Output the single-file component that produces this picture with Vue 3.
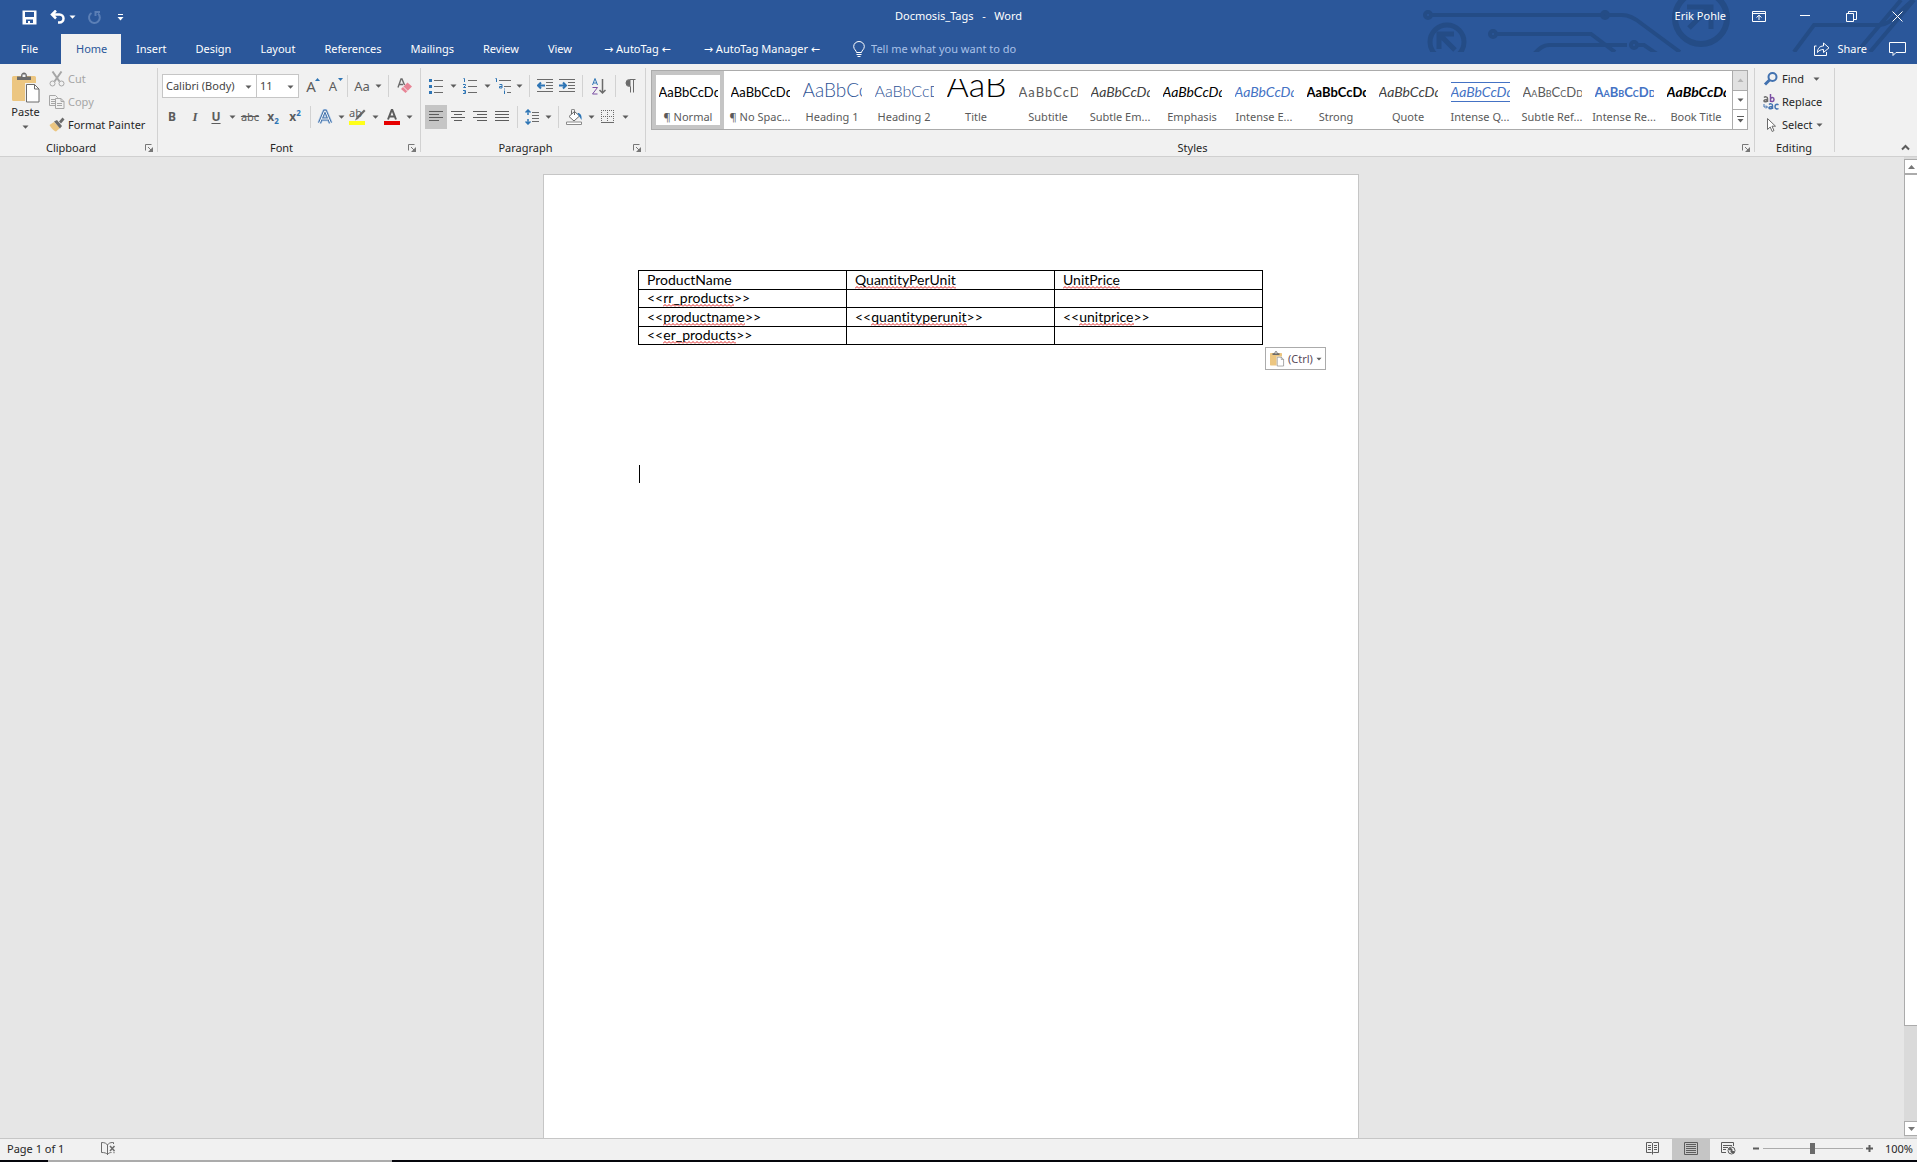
<script setup>
import { ref } from 'vue'

const tabs = ['Insert', 'Design', 'Layout', 'References', 'Mailings', 'Review', 'View']
const addins = ['AutoTag', 'AutoTag Manager']

const styles = [
  { name: '¶ Normal', cls: 'plain' },
  { name: '¶ No Spac...', cls: 'plain' },
  { name: 'Heading 1', cls: 'h1' },
  { name: 'Heading 2', cls: 'h2' },
  { name: 'Title', cls: 'title' },
  { name: 'Subtitle', cls: 'subtitle' },
  { name: 'Subtle Em...', cls: 'subtle-em' },
  { name: 'Emphasis', cls: 'emphasis' },
  { name: 'Intense E...', cls: 'intense-em' },
  { name: 'Strong', cls: 'strong' },
  { name: 'Quote', cls: 'subtle-em' },
  { name: 'Intense Q...', cls: 'intense-quote' },
  { name: 'Subtle Ref...', cls: 'subtle-ref' },
  { name: 'Intense Re...', cls: 'intense-ref' },
  { name: 'Book Title', cls: 'book' },
]

const rows = [
  [{ t: 'ProductName' }, { t: 'QuantityPerUnit', bad: true }, { t: 'UnitPrice', bad: true }],
  [{ pre: '<<', t: 'rr_products', post: '>>', bad: true }, {}, {}],
  [
    { pre: '<<', t: 'productname', post: '>>', bad: true },
    { pre: '<<', t: 'quantityperunit', post: '>>', bad: true },
    { pre: '<<', t: 'unitprice', post: '>>', bad: true },
  ],
  [{ pre: '<<', t: 'er_products', post: '>>', bad: true }, {}, {}],
]

const zoom = ref(50)
const tell = ref('')
</script>

<template>
  <div class="app">
    <svg class="defs" aria-hidden="true">
      <symbol id="caret" viewBox="0 0 7 4"><path d="M0.5 0.5h6L3.5 3.8z" fill="currentColor" /></symbol>
      <symbol id="launch" viewBox="0 0 9 9">
        <path d="M0.5 6.500V0.500H6.500" fill="none" stroke="#777" />
        <path d="M3 3l3 3" stroke="#777" fill="none" /><path d="M8 3v5H3z" fill="#777" />
      </symbol>
      <symbol id="clip" viewBox="0 0 30 32">
        <path d="M1 5.500a1.500 1.500 0 0 1 1.500-1.500h21a1.500 1.500 0 0 1 1.500 1.500V29H2.500A1.500 1.500 0 0 1 1 27.500z" fill="#ecc681" />
        <path d="M6 8V4.500h4C10 1.500 11.500 0.500 13 0.500s3 1 3 4h4V8z" fill="#6b6b6b" />
        <rect x="11.500" y="2.500" width="3" height="2.500" fill="#f1f1f1" />
        <path d="M14 11h11l5 5v15H14z" fill="#f1f1f1" />
        <path d="M15.500 12.500h8l4.500 4.500v13H15.500z" fill="#fff" stroke="#6b6b6b" />
        <path d="M23.500 12.500V17H28" fill="none" stroke="#6b6b6b" />
      </symbol>
    </svg>

    <header class="titlebar">
      <svg class="circuit" viewBox="0 0 500 52" aria-hidden="true" fill="none" stroke="#244c86" stroke-width="4">
        <circle cx="11" cy="15" r="3" /><path d="M14 15h184" />
        <circle cx="30" cy="42" r="17" stroke-width="5" />
        <path d="M22 34l16 16M22 49V34h15" stroke-width="5" />
        <circle cx="76" cy="34" r="3" /><path d="M79 34h95l24 18" />
        <path d="M117 54c4-4 8-9 15-9h78" />
        <circle cx="188" cy="15" r="3" /><path d="M191 15h14c8 0 14 4 20 9l38 28" />
        <circle cx="217" cy="45" r="3" /><path d="M220 45h7l13 9" />
        <circle cx="284" cy="18" r="26" stroke-width="6" />
        <path d="M272 28l20-20M270 7h24v22" stroke-width="5" />
        <path d="M377 52l20-27h66c9 0 12-7 33-25M440 52l44-52M453 52l44-52" />
      </svg>
      <div class="side">
        <div class="qat">
          <button class="flat save" aria-label="Save">
            <svg width="15" height="15" viewBox="0 0 15 15"><path d="M0.500 0.500h14v14h-14z" fill="#fff" /><path d="M3 2h9v5H3zM4 9.500h7V13H8v-2H6v2H4z" fill="#2b579a" /></svg>
          </button>
          <button class="flat undo" aria-label="Undo">
            <svg width="16" height="14" viewBox="0 0 16 14" fill="none" stroke="#fff" stroke-width="2.500"><path d="M6 0.500L2 4.500l4 4M2.500 4.500h7a4 4 0 0 1 0 8H8" /></svg>
          </button>
          <button class="flat undo-more" aria-label="Undo history"><svg width="7" height="4"><use href="#caret" /></svg></button>
          <button class="flat redo" aria-label="Repeat" disabled>
            <svg width="15" height="15" viewBox="0 0 15 15" fill="none" stroke="#5b7fb6" stroke-width="2"><path d="M4.500 3A5.400 5.400 0 1 0 11 3.500M8.500 6V2H13" /></svg>
          </button>
          <button class="flat custom" aria-label="Customize toolbar">
            <svg width="7" height="7" viewBox="0 0 7 7"><path d="M1 0h5v1H1zM0.500 3h6l-3 3.500z" fill="#fff" /></svg>
          </button>
        </div>
      </div>
      <h1>Docmosis_Tags&nbsp;&nbsp; -&nbsp;&nbsp; Word</h1>
      <div class="side winctl">
        <span class="user">Erik Pohle</span>
        <button class="flat" aria-label="Ribbon display options">
          <svg width="14" height="11" viewBox="0 0 14 11" fill="none" stroke="#fff"><path d="M0.500 0.500h13v10H0.500zM0.500 2.500h13M7 9V4.500M4.500 6.500L7 4.200l2.500 2.300" /></svg>
        </button>
        <button class="flat" aria-label="Minimize"><svg width="10" height="2"><path d="M0 0.500h10" stroke="#fff" /></svg></button>
        <button class="flat" aria-label="Restore">
          <svg width="11" height="11" viewBox="0 0 11 11" fill="none" stroke="#fff"><path d="M0.500 2.500h7v8h-7zM2.500 2.500v-2h8v8h-3" /></svg>
        </button>
        <button class="flat close" aria-label="Close"><svg width="11" height="11" viewBox="0 0 11 11"><path d="M0.500 0.500l10 10M10.500 0.500l-10 10" stroke="#fff" /></svg></button>
      </div>
    </header>

    <nav class="tabs">
      <button class="tab file">File</button>
      <button class="tab active">Home</button>
      <button v-for="t in tabs" :key="t" class="tab">{{ t }}</button>
      <button v-for="t in addins" :key="t" class="tab addin"><span class="arrow">→</span> {{ t }} <span class="arrow">←</span></button>
      <label class="tell">
        <svg width="12" height="17" viewBox="0 0 12 17" fill="none" stroke="#fff"><path d="M3.500 11.500C3.500 9.500 0.700 8.500 0.700 5.500a5.300 5 0 0 1 10.600 0c0 3-2.800 4-2.800 6zM3.500 13.500h5M4.500 15.500h3" /></svg>
        <input v-model="tell" type="text" placeholder="Tell me what you want to do" aria-label="Tell me what you want to do">
      </label>
      <div class="tabs-right">
        <button class="flat share">
          <svg width="16" height="14" viewBox="0 0 16 14" fill="none" stroke="#fff"><path d="M2.500 4H0.500v9.500h12V10M9.500 1v3C5.500 4 3.500 6.500 3.500 10.500 5 8.500 6.500 7.500 9.500 7.500v3L15 5.800z" /></svg>
          Share
        </button>
        <button class="flat" aria-label="Comments">
          <svg width="17" height="14" viewBox="0 0 17 14" fill="none" stroke="#fff"><path d="M0.500 0.500h16v10H7L4 13.500v-3H0.500z" /></svg>
        </button>
      </div>
    </nav>

    <section class="ribbon">
      <div class="group clipboard">
        <div class="clip-body">
          <button class="paste">
            <svg width="30" height="32"><use href="#clip" /></svg>
            <span>Paste</span>
            <svg class="caret" width="7" height="4"><use href="#caret" /></svg>
          </button>
          <div class="stack">
            <button class="line off" disabled>
              <svg width="16" height="16" viewBox="0 0 16 16" fill="none" stroke="#a6a6a6"><path d="M3.500 0.500l7 10M12.500 0.500l-7 10" stroke-width="2" /><circle cx="3.500" cy="12.500" r="2.500" /><circle cx="12.500" cy="12.500" r="2.500" /></svg>
              Cut
            </button>
            <button class="line off" disabled>
              <svg width="16" height="16" viewBox="0 0 16 16" fill="#f1f1f1" stroke="#a6a6a6"><path d="M0.500 1.500h6l2 2v8h-8zM2 5.500h4M2 7.500h4M2 9.500h4" /><path d="M6.500 4.500h5.500l3 3v7H6.500zM12 4.500v3h3M8 9.500h5M8 11.500h5" /></svg>
              Copy
            </button>
            <button class="line">
              <svg width="16" height="16" viewBox="0 0 16 16"><path d="M0.500 8L5 5l6 6-4 3.500C5 14 2 11 0.500 8z" fill="#ecc681" /><path d="M5 4.500l3-1.500 5 6-2 2.500z" fill="#6b6b6b" /><path d="M10 4.500L13.500 0.500 15.500 2.500 12 6.500z" fill="#6b6b6b" /></svg>
              Format Painter
            </button>
          </div>
        </div>
        <div class="caption">Clipboard<button class="launcher" aria-label="Clipboard settings"><svg width="9" height="9"><use href="#launch" /></svg></button></div>
      </div>

      <div class="group font">
        <div class="rows">
          <div class="row combos">
            <span class="combo face"><select aria-label="Font"><option>Calibri (Body)</option></select><svg class="caret" width="7" height="4"><use href="#caret" /></svg></span>
            <span class="combo size"><select aria-label="Font size"><option>11</option></select><svg class="caret" width="7" height="4"><use href="#caret" /></svg></span>
            <button class="tool w24 big" aria-label="Grow font">A<svg class="tick" width="5" height="3" viewBox="0 0 5 3"><path d="M0 3h5L2.500 0z" fill="#2e75b5" /></svg></button>
            <button class="tool w20 mid" aria-label="Shrink font">A<svg class="tick" width="5" height="3" viewBox="0 0 5 3"><path d="M0 0h5L2.500 3z" fill="#2e75b5" /></svg></button>
            <i class="sep" />
            <button class="tool w20 mid" aria-label="Change case">Aa</button>
            <button class="tool drop" aria-label="Case options"><svg width="7" height="4"><use href="#caret" /></svg></button>
            <i class="sep" />
            <button class="tool w24" aria-label="Clear formatting">
              <svg width="16" height="16" viewBox="0 0 16 16"><path d="M1 9.500L4 1h1l2.500 6M2 6.500h4" fill="none" stroke="#6b6b6b" stroke-width="1.400" /><path d="M10.500 4.500L15 8.500 8.500 15 4 11z" fill="#e88596" /><path d="M6 8.500l4.500 4.500" stroke="#f1f1f1" /></svg>
            </button>
          </div>
          <div class="row">
            <button class="tool w24 bold">B</button>
            <button class="tool w22 ital">I</button>
            <button class="tool w20 under">U</button>
            <button class="tool drop" aria-label="Underline options"><svg width="7" height="4"><use href="#caret" /></svg></button>
            <button class="tool w24 strike">abc</button>
            <button class="tool w22 script">x<sub>2</sub></button>
            <button class="tool w22 script">x<sup>2</sup></button>
            <i class="sep" />
            <button class="tool w20" aria-label="Text effects">
              <svg width="16" height="16" viewBox="0 0 16 16" stroke-linejoin="round"><path d="M2.500 14L7.500 2h1l5 12M4.500 10h7" fill="none" stroke="#b4cdea" stroke-width="4.500" /><path d="M2.500 14L7.500 2h1l5 12M4.500 10h7" fill="none" stroke="#4472a8" stroke-width="3" /><path d="M2.500 14L7.500 2h1l5 12M4.500 10h7" fill="none" stroke="#fff" stroke-width="1" /></svg>
            </button>
            <button class="tool drop" aria-label="Text effect options"><svg width="7" height="4"><use href="#caret" /></svg></button>
            <button class="tool w22 hl" aria-label="Highlight"><span>ab</span><svg width="18" height="16" viewBox="0 0 18 16"><path d="M0 12h16v4H0z" fill="#ffff1a" /><path d="M15 0.500l1.500 1.500L9 10l-3 1.500L7.500 8z" fill="#6b6b6b" /></svg></button>
            <button class="tool drop" aria-label="Highlight colors"><svg width="7" height="4"><use href="#caret" /></svg></button>
            <button class="tool w22" aria-label="Font color">
              <svg width="16" height="16" viewBox="0 0 16 16"><path d="M4 10.500L7.700 1h0.600L12 10.500M5.500 7.500h5" fill="none" stroke="#5c5c5c" stroke-width="2" /><path d="M0 12h16v4H0z" fill="#e60000" /></svg>
            </button>
            <button class="tool drop" aria-label="Font colors"><svg width="7" height="4"><use href="#caret" /></svg></button>
          </div>
        </div>
        <div class="caption">Font<button class="launcher" aria-label="Font settings"><svg width="9" height="9"><use href="#launch" /></svg></button></div>
      </div>

      <div class="group para">
        <div class="rows">
          <div class="row">
            <button class="tool w22" aria-label="Bullets">
              <svg width="14" height="16" viewBox="0 0 14 16"><path d="M0 1h3v3H0zM0 7h3v3H0zM0 13h3v3H0z" fill="#2e75b5" /><path d="M5 2.500h9M5 8.500h9M5 14.500h9" stroke="#6b6b6b" /></svg>
            </button>
            <button class="tool drop" aria-label="Bullet library"><svg width="7" height="4"><use href="#caret" /></svg></button>
            <button class="tool w22" aria-label="Numbering">
              <svg width="14" height="18" viewBox="0 0 14 18"><path d="M0.500 1.500h1V5M0 7.500h2.500v1L0.500 10.500H3M0 13.500h2.500v3H0M1 15h1.500" fill="none" stroke="#2e75b5" /><path d="M5 3.500h9M5 9.500h9M5 15.500h9" stroke="#6b6b6b" /></svg>
            </button>
            <button class="tool drop" aria-label="Number library"><svg width="7" height="4"><use href="#caret" /></svg></button>
            <button class="tool w20" aria-label="Multilevel list">
              <svg width="17" height="18" viewBox="0 0 17 18"><path d="M0.500 1.500h1V5M4.500 7.500h2.500v3.500H4.500V9.500H7M9.500 13.500V17M9.500 11.500v1" fill="none" stroke="#2e75b5" /><path d="M4 3.500h12M9 9.500h7M12 15.500h4" stroke="#6b6b6b" /></svg>
            </button>
            <button class="tool drop" aria-label="List library"><svg width="7" height="4"><use href="#caret" /></svg></button>
            <i class="sep" />
            <button class="tool w22" aria-label="Decrease indent">
              <svg width="16" height="14" viewBox="0 0 16 14"><path d="M0 0.500h16M9 3.500h7M9 6.500h7M9 9.500h7M0 12.500h16" stroke="#6b6b6b" /><path d="M1 6.500h7M4 3.500L1 6.500l3 3" stroke="#2e75b5" stroke-width="2" fill="none" /></svg>
            </button>
            <button class="tool w22" aria-label="Increase indent">
              <svg width="16" height="14" viewBox="0 0 16 14"><path d="M0 0.500h16M9 3.500h7M9 6.500h7M9 9.500h7M0 12.500h16" stroke="#6b6b6b" /><path d="M0 6.500h7M4 3.500l3 3-3 3" stroke="#2e75b5" stroke-width="2" fill="none" /></svg>
            </button>
            <i class="sep" />
            <button class="tool w24" aria-label="Sort">
              <svg width="14" height="17" viewBox="0 0 14 17" fill="none"><path d="M0.500 7L3 0.500 5.500 7M1.500 5h3" stroke="#2e75b5" /><path d="M0.500 9.500h5l-5 6.500h5" stroke="#7b4fa3" /><path d="M10.500 1v14M7.500 12l3 3 3-3" stroke="#6b6b6b" stroke-width="1.500" /></svg>
            </button>
            <i class="sep" />
            <button class="tool w20" aria-label="Show marks">
              <svg width="11" height="14" viewBox="0 0 11 14"><path d="M10.500 0.500H4.500a3.500 3.500 0 0 0 0 7H5.500V13.500M8.500 0.500v13" fill="none" stroke="#6b6b6b" /><path d="M5.500 1H4a3 3 0 0 0 0 6h1.500z" fill="#6b6b6b" /></svg>
            </button>
          </div>
          <div class="row">
            <button class="tool w22 on" aria-label="Align left"><svg width="14" height="12"><path d="M0 0.500h14M0 3.500h10M0 6.500h14M0 9.500h10" stroke="#5c5c5c" /></svg></button>
            <button class="tool w22" aria-label="Center"><svg width="14" height="12"><path d="M0 0.500h14M3 3.500h8M0 6.500h14M3 9.500h8" stroke="#5c5c5c" /></svg></button>
            <button class="tool w22" aria-label="Align right"><svg width="14" height="12"><path d="M0 0.500h14M4 3.500h10M0 6.500h14M4 9.500h10" stroke="#5c5c5c" /></svg></button>
            <button class="tool w22" aria-label="Justify"><svg width="14" height="12"><path d="M0 0.500h14M0 3.500h14M0 6.500h14M0 9.500h14" stroke="#5c5c5c" /></svg></button>
            <i class="sep" />
            <button class="tool w20" aria-label="Line spacing">
              <svg width="14" height="16" viewBox="0 0 14 16"><path d="M3 1v5M3 10v5M0.500 3.500L3 1l2.500 2.500M0.500 12.500L3 15l2.500-2.500" fill="none" stroke="#2e75b5" stroke-width="1.500" /><path d="M7 3.500h7M7 6.500h7M7 9.500h7M7 12.500h7" stroke="#6b6b6b" /></svg>
            </button>
            <button class="tool drop" aria-label="Line spacing options"><svg width="7" height="4"><use href="#caret" /></svg></button>
            <i class="sep" />
            <button class="tool w22" aria-label="Shading">
              <svg width="17" height="16" viewBox="0 0 17 16"><path d="M3 7.500l5.500-5 5 4.500-5.500 5z" fill="#fff" stroke="#6b6b6b" /><path d="M5.500 5V1.500a1.500 1.500 0 0 1 3 0V6" fill="none" stroke="#6b6b6b" /><path d="M11.500 4c3 0 4.500 2.500 4 7l-2.500-4z" fill="#2e75b5" /><path d="M0.500 13h15v2.500h-15z" fill="#fff" stroke="#8a8a8a" /></svg>
            </button>
            <button class="tool drop" aria-label="Shading colors"><svg width="7" height="4"><use href="#caret" /></svg></button>
            <button class="tool w22" aria-label="Borders">
              <svg width="14" height="14" viewBox="0 0 14 14" fill="none" stroke="#6b6b6b"><path d="M0 0.500h13M0 6.500h13M0.500 0v13M6.500 0v13M12.500 0v13" stroke-dasharray="1 1" /><path d="M0 12.500h13" /></svg>
            </button>
            <button class="tool drop" aria-label="Border options"><svg width="7" height="4"><use href="#caret" /></svg></button>
          </div>
        </div>
        <div class="caption">Paragraph<button class="launcher" aria-label="Paragraph settings"><svg width="9" height="9"><use href="#launch" /></svg></button></div>
      </div>

      <div class="group stylesgrp">
        <div class="gallery">
          <div class="cards">
            <button v-for="(s, i) in styles" :key="s.name" class="card" :class="{ sel: i === 0 }">
              <span class="sample"><span :class="s.cls">AaBbCcDd</span></span>
              <span class="name">{{ s.name }}</span>
            </button>
          </div>
          <div class="gscroll">
            <button class="dim" aria-label="Scroll up"><svg width="7" height="4" viewBox="0 0 7 4"><path d="M0.500 4h6L3.500 0.500z" fill="#b5b5b5" /></svg></button>
            <button aria-label="Scroll down"><svg width="7" height="4"><use href="#caret" /></svg></button>
            <button aria-label="More styles"><svg width="7" height="7" viewBox="0 0 7 7"><path d="M0 0h7v1H0zM0.500 3h6L3.500 6.500z" fill="#5c5c5c" /></svg></button>
          </div>
        </div>
        <div class="caption">Styles<button class="launcher" aria-label="Style settings"><svg width="9" height="9"><use href="#launch" /></svg></button></div>
      </div>

      <div class="group editing">
        <div class="stack">
          <button class="line find">
            <svg width="16" height="14" viewBox="0 0 16 14" fill="none" stroke="#4272b0"><circle cx="9.500" cy="5" r="4" stroke-width="2" /><path d="M6.500 8L2 12.500" stroke-width="3" /></svg>
            Find <svg class="caret" width="7" height="4"><use href="#caret" /></svg>
          </button>
          <button class="line">
            <svg width="16" height="16" viewBox="0 0 16 16"><g fill="none" stroke-width="1.500"><path d="M1 3.500C2 2.500 4.500 2.500 4.500 4.500V8M4.500 5.500C2 5.500 0.800 6 1 7s2.500 1.200 3.500-0.500" stroke="#6b6b6b" /><path d="M7.500 0v8M7.500 5C8 3 11 2.800 11 5.500S8 8 7.500 6.500" stroke="#7b4fa3" /><path d="M6 10.500c1-1 3.500-1 3.500 1V15M9.500 12.500c-2.500 0-3.700.5-3.500 1.500s2.500 1.200 3.500-.5M15.500 10.800c-1.500-1-3.500-.3-3.500 1.900s2 2.800 3.500 1.800" stroke="#4272b0" /></g><path d="M1 10v3h3M3 11.500l1.500 1.500L3 14.500" fill="none" stroke="#4272b0" /></svg>
            Replace
          </button>
          <button class="line">
            <svg width="16" height="16" viewBox="0 0 16 16"><path d="M4.500 1.500v11l2.700-2.500 2 4.500 1.800-1-2-4.300h3.500z" fill="#fff" stroke="#6b6b6b" /></svg>
            Select<svg class="caret" width="7" height="4"><use href="#caret" /></svg>
          </button>
        </div>
        <div class="caption">Editing</div>
      </div>

      <div class="tail">
        <button class="flat" aria-label="Collapse ribbon"><svg width="9" height="7" viewBox="0 0 9 7"><path d="M1 5.500l3.500-3.500L8 5.500" fill="none" stroke="#5c5c5c" stroke-width="2" /></svg></button>
      </div>
    </section>

    <main class="canvas">
      <div class="desk">
        <article class="sheet">
          <div class="tablewrap">
            <table>
              <tbody>
                <tr v-for="(r, i) in rows" :key="i">
                  <td v-for="(c, j) in r" :key="j">{{ c.pre }}<span :class="{ bad: c.bad }">{{ c.t }}</span>{{ c.post }}</td>
                </tr>
              </tbody>
            </table>
            <button class="pasteopt">
              <svg width="16" height="16"><use href="#clip" /></svg>(Ctrl)<svg class="caret" width="6" height="4"><use href="#caret" /></svg>
            </button>
          </div>
          <div class="cursor" />
        </article>
      </div>
      <div class="scrollbar">
        <button aria-label="Scroll page up"><svg width="7" height="4" viewBox="0 0 7 4"><path d="M0 4h7L3.500 0z" fill="#777" /></svg></button>
        <div class="track"><div class="thumb" /></div>
        <button aria-label="Scroll page down"><svg width="7" height="4" viewBox="0 0 7 4"><path d="M0 0h7L3.500 4z" fill="#777" /></svg></button>
      </div>
    </main>

    <footer class="status">
      <span>Page 1 of 1</span>
      <button class="flat proof" aria-label="Proofing">
        <svg width="15" height="14" viewBox="0 0 15 14" fill="none" stroke="#6b6b6b"><path d="M6.500 13V3C5.500 1.500 4 0.500 0.500 0.500v10c3 0 5 .5 6 2 1-1.500 2.500-2 4-2M6.500 3c1-1.500 2-2.500 6-2.500V2" /><path d="M9 4l4.500 5M13.500 4L9 9M12.500 10.500h1" stroke-width="1.500" /></svg>
      </button>
      <div class="views">
        <button aria-label="Read mode">
          <svg width="14" height="13" viewBox="0 0 14 13" fill="none" stroke="#5c5c5c"><path d="M6.500 12.500v-11L5.500 0.500h-5v10h5l1 1 1-1h5v-10h-5l-1 1M2 3.500h3M2 5.500h3M2 7.500h3M8 3.500h3M8 5.500h3M8 7.500h3" /></svg>
        </button>
        <button class="on" aria-label="Print layout">
          <svg width="14" height="13" viewBox="0 0 14 13" fill="none" stroke="#5c5c5c"><path d="M0.500 0.500h13v12H0.500zM2 2.500h10M2 4.500h10M2 6.500h10M2 8.500h10M2 10.500h10" /></svg>
        </button>
        <button aria-label="Web layout">
          <svg width="15" height="13" viewBox="0 0 15 13" fill="none" stroke="#5c5c5c"><path d="M5 10.500H0.500v-10h12V4M2 3.500h9M2 5.500h5M2 7.500h3" /><circle cx="10.500" cy="8.500" r="3.500" fill="#f1f1f1" /><path d="M8 7.500c2-1 3 0 2.500 1.500S12 10 13 10" stroke-width="2" /></svg>
        </button>
      </div>
      <div class="zoomer">
        <button aria-label="Zoom out"><svg width="7" height="7"><path d="M0 3.500h6" stroke="#5c5c5c" stroke-width="2" /></svg></button>
        <input v-model="zoom" type="range" min="0" max="100" aria-label="Zoom">
        <button aria-label="Zoom in"><svg width="7" height="7"><path d="M0 3.500h7M3.500 0v7" stroke="#5c5c5c" stroke-width="2" /></svg></button>
        <span class="pct">100%</span>
      </div>
    </footer>
    <div class="taskedge"><i class="dark" /><i class="light" /><i class="dark rest" /></div>
  </div>
</template>

<style>
html, body, #app { height: 100%; }
</style>

<style scoped>
.app {
  display: flex;
  flex-direction: column;
  height: 100%;
  overflow: hidden;
  background: #f1f1f1;
  color: #262626;
  font: 11px/16px "Noto Sans", "Open Sans", sans-serif;
}
.app *, .app { box-sizing: border-box; }
.defs { position: absolute; width: 0; height: 0; }
svg { display: block; flex: none; }
button {
  padding: 0;
  border: 0;
  background: none;
  color: inherit;
  font: inherit;
  white-space: nowrap;
}
.flat { display: flex; align-items: center; justify-content: center; }
.caret { color: #5c5c5c; }

/* Title bar */
.titlebar {
  position: relative;
  display: flex;
  align-items: center;
  height: 34px;
  flex: none;
  background: #2b579a;
  color: #fff;
}
.circuit { position: absolute; top: 0; right: 0; width: 500px; height: 52px; }
.side { flex: 1; min-width: 0; }
.qat { display: flex; align-items: center; padding-left: 20px; }
.save { width: 18px; }
.undo { width: 16px; margin-left: 12px; }
.undo-more { width: 7px; margin: 0 10px 0 3px; }
.redo { width: 16px; }
.custom { width: 26px; margin-left: 5px; }
h1 { margin: 0 0 2px; font-size: 11px; font-weight: 400; }
.winctl { display: flex; align-items: center; justify-content: flex-end; height: 32px; margin-bottom: 2px; position: relative; }
.winctl button { width: 46px; }
.winctl .close { width: 43px; padding-left: 3px; }
.user { margin-right: 10px; }

/* Tabs */
.tabs { display: flex; height: 30px; flex: none; background: #2b579a; color: #fff; }
.tab { padding: 0 14px 0 15px; }
.tab.file { width: 61px; padding: 0 17px 0 15px; }
.tab.active { width: 60px; background: #f1f1f1; color: #2b579a; }
.tab.addin { padding: 0 15px 0 18px; }
.arrow { font-family: "DejaVu Sans", sans-serif; }
.tell { display: flex; align-items: center; gap: 6px; margin-left: 18px; }
.tell input { width: 170px; padding: 0; border: 0; background: none; color: #fff; font: inherit; outline: 0; }
.tell input::placeholder { color: #a9c1e8; opacity: 1; }
.tabs-right { position: relative; display: flex; gap: 22px; margin-left: auto; padding-right: 11px; }
.share { gap: 7px; }

/* Ribbon */
.ribbon { display: flex; height: 93px; flex: none; border-bottom: 1px solid #d0d0d0; background: #f1f1f1; }
.group { position: relative; display: flex; flex-direction: column; flex: none; }
.group::after {
  content: "";
  position: absolute;
  top: 4px;
  right: 0;
  width: 1px;
  height: 84px;
  background: #d2d2d2;
}
.clipboard { width: 158px; }
.font { width: 263px; }
.para { width: 225px; }
.stylesgrp { flex: 1; min-width: 0; }
.editing { width: 80px; }
.tail { display: flex; align-items: flex-end; justify-content: flex-end; width: 82px; padding: 0 7px 5px 0; }
.caption { margin-top: auto; padding-right: 16px; text-align: center; line-height: 17px; }
.editing .caption { padding-right: 2px; }
.launcher { position: absolute; right: 4px; bottom: 3px; }

.clip-body { display: flex; padding: 3px 0 0 5px; }
.paste { display: flex; flex-direction: column; align-items: center; width: 41px; padding-top: 5px; }
.paste .caret { margin-top: 5px; }
.stack { display: flex; flex-direction: column; padding-left: 3px; }
.line { display: flex; align-items: center; gap: 3px; height: 23px; }
.off { color: #a6a6a6; }
.editing .stack { padding: 3px 0 0 8px; }
.find .caret { margin-left: 6px; }

.rows { display: flex; flex-direction: column; gap: 7px; padding: 10px 0 0 2px; }
.para .rows { padding-left: 4px; }
.row { display: flex; height: 24px; }
.combos { padding-left: 2px; }
.combo { position: relative; display: flex; height: 24px; border: 1px solid #c6c6c6; background: #fff; }
.combo + .combo { border-left: 0; }
.face { width: 95px; }
.size { width: 42px; }
.combo select { width: 100%; padding: 0 3px; border: 0; background: none; color: #444; font: inherit; appearance: none; }
.combo .caret { position: absolute; top: 10px; right: 4px; pointer-events: none; }
.tool { position: relative; display: flex; align-items: center; justify-content: center; flex: none; height: 24px; color: #5c5c5c; }
.w20 { width: 20px; }
.w22 { width: 22px; }
.w24 { width: 24px; }
.drop { width: 12px; }
.on { background: #c5c5c5; }
.sep { width: 1px; height: 22px; margin: 1px 4px; flex: none; background: #d2d2d2; }
.big { font-size: 15px; }
.mid { font-size: 13px; }
.tick { position: absolute; top: 4px; right: 3px; }
.mid .tick { right: 0; }
.bold { font-weight: 700; font-size: 12px; }
.ital { font: italic 700 13px "Liberation Serif", serif; }
.under { font-weight: 700; font-size: 12px; text-decoration: underline; text-underline-offset: 2px; }
.strike { text-decoration: line-through; }
.script { font-weight: 700; font-size: 12px; }
.script sub, .script sup { color: #2e75b5; font-size: 8px; line-height: 8px; }
.script sub { margin-top: 8px; }
.script sup { margin-top: -8px; }
.hl span { position: absolute; top: 1px; left: 2px; line-height: 14px; }

/* Style gallery */
.gallery { display: flex; height: 60px; margin: 6px 7px 0 5px; border: 1px solid #ababab; background: #fff; }
.cards { display: flex; flex: 1; min-width: 0; overflow: hidden; }
.card { display: flex; flex-direction: column; align-items: center; width: 72px; flex: none; padding: 8px 0 0; }
.card.sel { padding: 4px 0 0; border: 4px solid #c5c5c5; }
.sample { width: 59px; height: 26px; overflow: hidden; font: 13px/26px Lato, Carlito, sans-serif; color: #000; text-align: left; }
.sample span { line-height: 0; }
.name { margin-top: 4px; line-height: 16px; color: #5a5a5a; }
.h1 { font-size: 19px; font-weight: 300; color: #2f5496; }
.h2 { font-size: 16px; font-weight: 300; color: #2f5496; }
.title { font-size: 34px; font-weight: 300; }
.subtitle { color: #5a5a5a; letter-spacing: 1px; }
.subtle-em, .emphasis, .intense-em, .intense-quote, .book { font-size: 14px; font-style: italic; }
.subtle-em { color: #404040; }
.intense-em, .intense-quote { color: #4472c4; }
.strong, .book { font-weight: 700; }
.sample:has(.intense-quote) { border-top: 1px solid #4472c4; border-bottom: 1px solid #4472c4; height: 20px; margin: 3px 0; line-height: 18px; }
.subtle-ref, .intense-ref { font-size: 13px; font-variant: small-caps; }
.subtle-ref { color: #5a5a5a; }
.intense-ref { color: #4472c4; font-weight: 700; }
.gscroll { display: flex; flex-direction: column; width: 15px; border-left: 1px solid #ababab; }
.gscroll button { display: flex; align-items: center; justify-content: center; flex: 1; color: #5c5c5c; border-top: 1px solid #ababab; }
.gscroll .dim { border-top: 0; background: #e1e1e1; }

/* Document */
.canvas { display: flex; flex: 1; min-height: 0; background: #e6e6e6; }
.desk { display: flex; justify-content: center; flex: 1; padding: 17px 2px 0 0; overflow: hidden; }
.sheet { width: 816px; padding: 95px 94px 0; border: 1px solid #c6c6c6; border-bottom: 0; background: #fff; }
.tablewrap { position: relative; }
table {
  width: 625px;
  border-collapse: collapse;
  table-layout: fixed;
  color: #000;
  font: 14px/15px Lato, Carlito, sans-serif;
  font-variant-ligatures: none;
}
td { height: 18px; padding: 0 7px 2px 8px; border: 1px solid #000; }
tr:nth-child(odd) td { height: 19px; }
.bad {
  padding-bottom: 1px;
  background: url("data:image/svg+xml,%3Csvg xmlns='http://www.w3.org/2000/svg' width='4' height='3'%3E%3Cpath d='M0 2.500L2 .5 4 2.500' fill='none' stroke='%23e02020'/%3E%3C/svg%3E") repeat-x left bottom;
}
.pasteopt {
  position: absolute;
  top: 77px;
  left: 627px;
  display: flex;
  align-items: center;
  gap: 3px;
  width: 61px;
  height: 23px;
  padding-left: 3px;
  border: 1px solid #ababab;
  background: #fff;
  color: #5a4a5a;
}
.cursor { width: 1px; height: 18px; margin: 120px 0 0 1px; background: #000; }
.scrollbar { display: flex; flex-direction: column; width: 13px; padding: 2px 0; background: #dadada; }
.scrollbar button { display: flex; align-items: center; justify-content: center; height: 15px; border: 1px solid #ababab; border-right: 0; background: #fff; }
.track { flex: 1; }
.thumb { height: 90%; border: 1px solid #ababab; border-right: 0; background: #fff; }

/* Status bar */
.status { display: flex; align-items: center; height: 22px; flex: none; padding: 0 4px 0 7px; border-top: 1px solid #c6c6c6; line-height: 14px; }
.status > span, .proof, .zoomer { margin-bottom: 2px; }
.proof { margin-left: 37px; }
.views { display: flex; align-self: stretch; margin-left: auto; }
.views button { display: flex; align-items: center; justify-content: center; width: 38px; padding-bottom: 2px; }
.zoomer { display: flex; align-items: center; gap: 3px; padding-left: 5px; }
.zoomer input { width: 100px; height: 12px; margin: 0; background: linear-gradient(#ababab, #ababab) center / 100% 1px no-repeat; appearance: none; }
.zoomer input::-webkit-slider-thumb { width: 5px; height: 11px; background: #6b6b6b; appearance: none; }
.pct { margin-left: 9px; }
.taskedge { display: flex; height: 2px; flex: none; }
.dark { width: 48px; background: #05060c; }
.light { width: 344px; background: #ababab; }
.rest { flex: 1; }
</style>
